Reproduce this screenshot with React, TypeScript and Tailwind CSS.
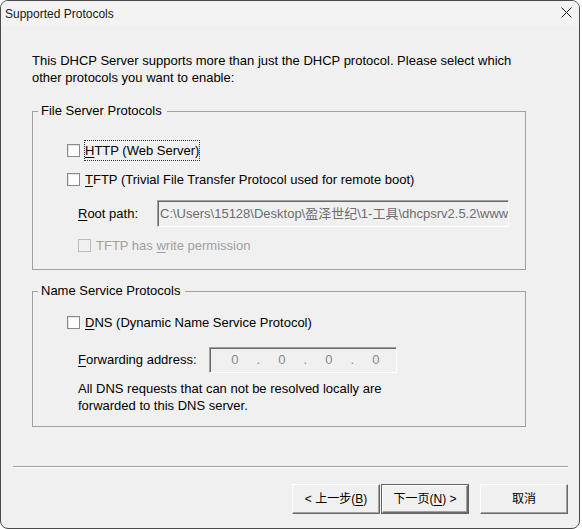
import React from 'react';

const font = { fontFamily: '"Liberation Sans", "Noto Sans CJK SC", sans-serif' };

function CheckBox({ disabled }: { disabled?: boolean }) {
    return (
        <span
            className={`inline-block w-[13px] h-[13px] shrink-0 border ${
                disabled ? 'border-[#bcbcbc] bg-[#f0f0f0]' : 'border-[#8a8a8a] bg-white shadow-[inset_1px_1px_0_#e3e3e3]'
            }`}
        />
    );
}

function Mn({ children }: { children: React.ReactNode }) {
    return <span className="underline underline-offset-[2px] decoration-1">{children}</span>;
}

function Sunken({ className, children }: { className: string; children?: React.ReactNode }) {
    return (
        <div
            className={`border border-t-[#a0a0a0] border-l-[#a0a0a0] border-r-white border-b-white bg-[#f0f0f0] shadow-[inset_1px_1px_0_#696969] overflow-hidden ${className}`}
        >
            {children}
        </div>
    );
}

function GroupBox({ label, className, children }: { label: string; className: string; children: React.ReactNode }) {
    return (
        <div className={`relative w-[494px] border border-[#a0a0a0] ${className}`}>
            <span className="absolute top-[-10px] left-[5px] pl-[3px] pr-[5px] bg-[#f0f0f0] leading-[17px]">{label}</span>
            {children}
        </div>
    );
}

function Button({ children, isDefault }: { children: React.ReactNode; isDefault?: boolean }) {
    const inner = (
        <div className="h-full w-full flex items-center justify-center border border-t-white border-l-white border-r-[#696969] border-b-[#696969] shadow-[inset_-1px_-1px_0_#a0a0a0] bg-[#f0f0f0] text-[12px] text-black">
            {children}
        </div>
    );
    if (isDefault) {
        return <div className="w-[88px] h-[30px] border border-[#646464]">{inner}</div>;
    }
    return <div className="w-[88px] h-[30px]">{inner}</div>;
}

export default function App() {
    return (
        <div className="w-[582px] h-[529px] bg-white" style={font}>
            <div className="w-[580px] h-[529px] rounded-[8px] border border-[#4a4a4a] bg-[#f0f0f0] overflow-hidden flex flex-col text-[13px] text-black">
                {/* title bar */}
                <div className="h-[25px] shrink-0 bg-[#f3f3f3] flex items-center justify-between pl-[4px] pr-[6px]">
                    <span className="text-[12px] text-[#1a1a1a] leading-none mt-[1px]">Supported Protocols</span>
                    <svg width="11" height="11" viewBox="0 0 11 11" className="mr-[1px] mb-[2px]">
                        <path d="M0.5 0.5 L10.5 10.5 M10.5 0.5 L0.5 10.5" stroke="#1a1a1a" strokeWidth="1" />
                    </svg>
                </div>

                <div className="pl-[31px] flex flex-col">
                    <p className="mt-[26px] leading-[17px] w-[480px]">
                        This DHCP Server supports more than just the DHCP protocol. Please select which other protocols you want to enable:
                    </p>

                    <GroupBox label="File Server Protocols" className="mt-[25px] h-[159px]">
                        <div className="pl-[34px] pt-[28px] flex flex-col">
                            <div className="flex items-center h-[21px]">
                                <CheckBox />
                                <span className="ml-[4px] h-[21px] leading-[19px] border border-dotted border-[#333]">
                                    <Mn>H</Mn>TTP (Web Server)
                                </span>
                            </div>
                            <div className="flex items-center h-[21px] mt-[8px]">
                                <CheckBox />
                                <span className="ml-[5px]">
                                    <Mn>T</Mn>FTP (Trivial File Transfer Protocol used for remote boot)
                                </span>
                            </div>
                            <div className="flex items-center mt-[10px] ml-[11px]">
                                <span className="w-[79px]">
                                    <Mn>R</Mn>oot path:
                                </span>
                                <Sunken className="w-[352px] h-[27px] flex items-center pl-[2px]">
                                    <span className="whitespace-nowrap text-[#6d6d6d]">C:\Users\15128\Desktop\盈泽世纪\1-工具\dhcpsrv2.5.2\www</span>
                                </Sunken>
                            </div>
                            <div className="flex items-center h-[21px] mt-[8px] ml-[11px] text-[#a0a0a0]">
                                <CheckBox disabled />
                                <span className="ml-[5px]">
                                    TFTP has <Mn>w</Mn>rite permission
                                </span>
                            </div>
                        </div>
                    </GroupBox>

                    <GroupBox label="Name Service Protocols" className="mt-[21px] h-[136px]">
                        <div className="pl-[34px] pt-[20px] flex flex-col">
                            <div className="flex items-center h-[21px]">
                                <CheckBox />
                                <span className="ml-[5px]">
                                    <Mn>D</Mn>NS (Dynamic Name Service Protocol)
                                </span>
                            </div>
                            <div className="flex items-center mt-[14px] ml-[11px]">
                                <span className="w-[131px]">
                                    <Mn>F</Mn>orwarding address:
                                </span>
                                <Sunken className="w-[188px] h-[26px] flex items-center pl-[13px] text-[#8a8a8a]">
                                    {['0', '.', '0', '.', '0', '.', '0'].map((c, i) => (
                                        <span key={i} className="w-[23.5px] text-center">
                                            {c}
                                        </span>
                                    ))}
                                </Sunken>
                            </div>
                            <p className="mt-[7px] ml-[11px] leading-[17px]">
                                All DNS requests that can not be resolved locally are
                                <br />
                                forwarded to this DNS server.
                            </p>
                        </div>
                    </GroupBox>
                </div>

                <div className="mt-[39px] ml-[12px] w-[555px] h-[2px] border-t border-[#a0a0a0] border-b border-b-white" />

                <div className="mt-[16px] flex items-center pl-[291px]">
                    <Button>
                        &lt; 上一步(<Mn>B</Mn>)
                    </Button>
                    <div className="ml-[1px]">
                        <Button isDefault>
                            下一页(<Mn>N</Mn>) &gt;
                        </Button>
                    </div>
                    <div className="ml-[11px]">
                        <Button>取消</Button>
                    </div>
                </div>
            </div>
        </div>
    );
}
